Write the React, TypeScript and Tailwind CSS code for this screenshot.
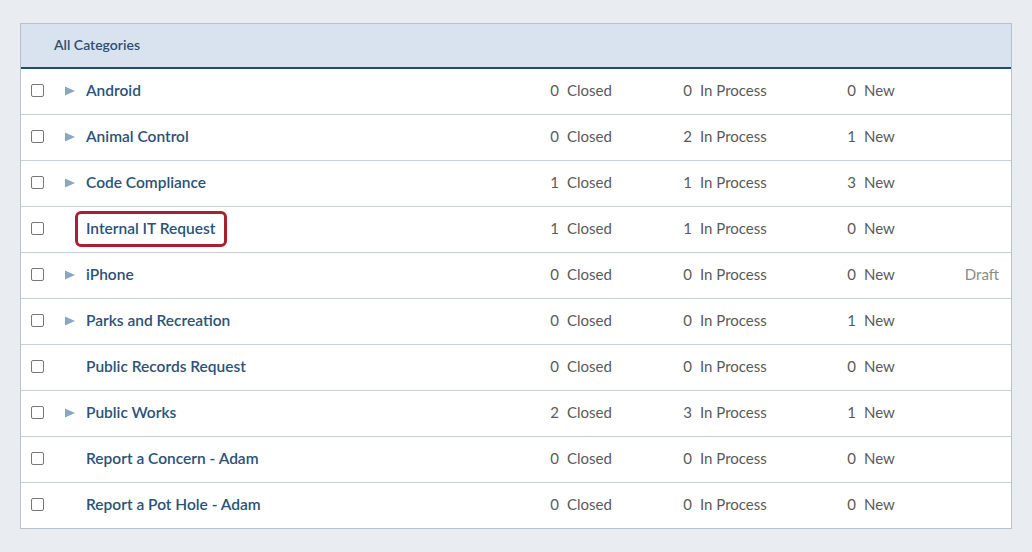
import React from "react";

type Category = {
	name: string;
	closed: number;
	inProcess: number;
	fresh: number;
	expandable: boolean;
	draft?: boolean;
	highlight?: boolean;
};

const categories: Category[] = [
	{ name: "Android", closed: 0, inProcess: 0, fresh: 0, expandable: true },
	{ name: "Animal Control", closed: 0, inProcess: 2, fresh: 1, expandable: true },
	{ name: "Code Compliance", closed: 1, inProcess: 1, fresh: 3, expandable: true },
	{ name: "Internal IT Request", closed: 1, inProcess: 1, fresh: 0, expandable: false, highlight: true },
	{ name: "iPhone", closed: 0, inProcess: 0, fresh: 0, expandable: true, draft: true },
	{ name: "Parks and Recreation", closed: 0, inProcess: 0, fresh: 1, expandable: true },
	{ name: "Public Records Request", closed: 0, inProcess: 0, fresh: 0, expandable: false },
	{ name: "Public Works", closed: 2, inProcess: 3, fresh: 1, expandable: true },
	{ name: "Report a Concern - Adam", closed: 0, inProcess: 0, fresh: 0, expandable: false },
	{ name: "Report a Pot Hole - Adam", closed: 0, inProcess: 0, fresh: 0, expandable: false },
];

function Caret() {
	return (
		<svg width="10" height="10" viewBox="0 0 10 10" className="block">
			<polygon points="0,0.5 10,5 0,9.5" fill="#8ba6c1" />
		</svg>
	);
}

function Count({ value, label, width }: { value: number; label: string; width: string }) {
	return (
		<div className={`flex items-center ${width}`}>
			<span className="w-[20px] text-right">{value}</span>
			<span className="ml-2">{label}</span>
		</div>
	);
}

function CategoryRow({ cat }: { cat: Category }) {
	return (
		<div className="flex h-[46px] items-center border-b border-[#c9d0d8] pb-[2px] text-[15px] text-[#5a5a5a] last:h-[45px] last:border-b-0">
			{/* checkbox */}
			<div className="w-[34px] pl-[10px]">
				<input
					type="checkbox"
					className="block h-[13px] w-[13px] appearance-none rounded-[2px] border border-[#777] bg-white"
				/>
			</div>
			<div className="w-[31px] pl-[10px]">{cat.expandable && <Caret />}</div>
			<div className="w-[453px]">
				<span className="relative text-[15.5px] font-semibold text-[#2b5279]">
					{cat.name}
					{cat.highlight && (
						<span className="absolute -top-[8px] -bottom-[10px] -left-[11px] -right-[12px] rounded-[6px] border-[3px] border-[#a8222e]" />
					)}
				</span>
			</div>
			<Count value={cat.closed} label="Closed" width="w-[133px]" />
			<Count value={cat.inProcess} label="In Process" width="w-[164px]" />
			<Count value={cat.fresh} label="New" width="w-[60px]" />
			<div className="flex-1 pr-[12px] text-right text-[#8a8a8a]">{cat.draft ? "Draft" : ""}</div>
		</div>
	);
}

export default function App() {
	return (
		<div
			className="min-h-[552px] bg-[#e9edf1] px-[20px] pt-[23px]"
			style={{ fontFamily: "Lato, 'Noto Sans', sans-serif" }}
		>
			<div className="w-[992px] border border-[#b8c2cc] bg-white">
				{/* header */}
				<div className="flex h-[45px] items-center border-b-2 border-[#1e4e75] bg-[#d9e3ef] pb-[2px] pl-[33px]">
					<span className="text-[14px] font-semibold text-[#2e4e6f]">All Categories</span>
				</div>
				{categories.map((cat) => (
					<CategoryRow key={cat.name} cat={cat} />
				))}
			</div>
		</div>
	);
}
